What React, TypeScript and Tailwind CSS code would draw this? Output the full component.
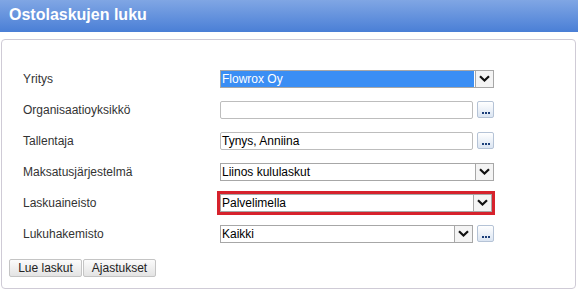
import React from "react";

function Chevron() {
  return (
    <svg width="11" height="7" viewBox="0 0 11 7">
      <path d="M1 1.2 L5.5 5.5 L10 1.2" fill="none" stroke="#111" strokeWidth="2.2" />
    </svg>
  );
}

function Select({ value, width, selected = false }: { value: string; width: string; selected?: boolean }) {
  return (
    <div className={`${width} h-[18px] flex border border-[#a7a7a7] bg-white`}>
      <div
        className={`flex-1 flex items-center px-[1px] text-[12px] leading-none ${
          selected ? "bg-[#3a8ef4] text-white" : "text-black"
        }`}
      >
        {value}
      </div>
      <div className="w-[18px] ml-[1px] border-l border-[#a7a7a7] bg-[#f4f4f4] flex items-center justify-center">
        <Chevron />
      </div>
    </div>
  );
}

function Dots() {
  return (
    <div className="w-[17px] h-[17px] ml-[4px] rounded-[2px] border border-[#b5c3d6] bg-gradient-to-b from-[#ffffff] to-[#dbe5f2] flex items-end justify-center pb-[3px]">
      <div className="flex gap-[1px]">
        <div className="w-[2px] h-[2px] bg-[#1c3f7a]" />
        <div className="w-[2px] h-[2px] bg-[#1c3f7a]" />
        <div className="w-[2px] h-[2px] bg-[#1c3f7a]" />
      </div>
    </div>
  );
}

function Input({ value }: { value: string }) {
  return (
    <div className="w-[253px] h-[18px] rounded-[2px] border border-[#bdbdbd] bg-white flex items-center px-[1px] text-[12px] leading-none text-black">
      {value}
    </div>
  );
}

function Row({ label, children }: { label: string; children: React.ReactNode }) {
  return (
    <div className="h-[31px] flex items-center">
      <div className="w-[197px] text-[12px] text-[#333]">{label}</div>
      <div className="flex items-center">{children}</div>
    </div>
  );
}

function Btn({ children }: { children: React.ReactNode }) {
  return (
    <div className="w-[73px] h-[18px] rounded-[2px] border border-[#c4c4c4] bg-gradient-to-b from-[#fbfbfb] to-[#e3e3e3] flex items-center justify-center text-[12px] text-[#222] leading-none">
      {children}
    </div>
  );
}

export default function App() {
  return (
    <div className="w-[578px] h-[292px] bg-white" style={{ fontFamily: '"Liberation Sans", Arial, sans-serif' }}>
      <div className="h-[32px] bg-gradient-to-b from-[#80a6e4] to-[#4a7fd6] flex items-center pl-[9px] pb-[2px]">
        <span className="text-white font-bold text-[16px]">Ostolaskujen luku</span>
      </div>
      <div className="mt-[7px] ml-[1px] w-[575px] h-[250px] border border-[#cfcbd6] rounded-[4px] pt-[23px]">
        <div className="pl-[21px]">
          <Row label="Yritys">
            <Select value="Flowrox Oy" width="w-[274px]" selected />
          </Row>
          <Row label="Organisaatioyksikkö">
            <Input value="" />
            <Dots />
          </Row>
          <Row label="Tallentaja">
            <Input value="Tynys, Anniina" />
            <Dots />
          </Row>
          <Row label="Maksatusjärjestelmä">
            <Select value="Liinos kululaskut" width="w-[274px]" />
          </Row>
          <Row label="Laskuaineisto">
            <div className="-ml-[3px] border-[3px] border-[#d6222c]">
              <Select value="Palvelimella" width="w-[272px]" />
            </div>
          </Row>
          <Row label="Lukuhakemisto">
            <Select value="Kaikki" width="w-[253px]" />
            <Dots />
          </Row>
        </div>
        <div className="mt-[10px] pl-[7px] flex gap-[1px]">
          <Btn>Lue laskut</Btn>
          <Btn>Ajastukset</Btn>
        </div>
      </div>
    </div>
  );
}
